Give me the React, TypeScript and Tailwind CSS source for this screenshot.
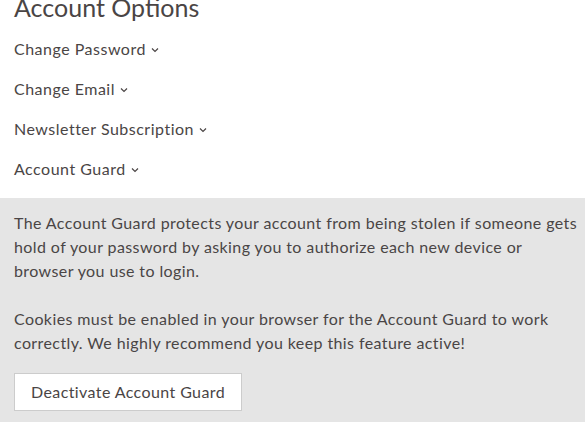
export default function App() {
  const options = ["Change Password", "Change Email", "Newsletter Subscription", "Account Guard"];

  return (
    <div className="w-[585px] h-[422px] overflow-hidden bg-white text-[#4a4545] font-['Lato','Open_Sans',sans-serif]">
      <div className="px-[14px]">
        <h2 className="text-[25px] leading-[30px] -mt-[8px] mb-[7px]">Account Options</h2>
        <ul className="tracking-[0.5px]">
          {options.map((label) => (
            <li key={label} className="h-[40px] flex items-center text-[16px]">
              <span>{label}</span>
              <svg className="ml-[5px] mt-[2px]" width="8" height="6" viewBox="0 0 8 6" fill="none">
                <path d="M1 1.5l3 3 3-3" stroke="currentColor" strokeWidth="1.2" />
              </svg>
            </li>
          ))}
        </ul>
      </div>

      {/* Account Guard panel */}
      <div className="bg-[#e5e5e5] mt-[9px] pl-[14px] pr-[2px] pt-[13px] pb-6 text-[16px] leading-[24px] tracking-[0.4px]">
        <p>
          The Account Guard protects your account from being stolen if someone gets hold of your password by asking
          you to authorize each new device or
          <br />
          browser you use to login.
        </p>
        <p className="mt-[24px] pr-[12px]">
          Cookies must be enabled in your browser for the Account Guard to work correctly. We highly recommend you
          keep this feature active!
        </p>
        <button className="mt-[18px] h-[38px] px-[16px] bg-white border border-[#cccccc] text-[16px] tracking-[0.4px]">
          Deactivate Account Guard
        </button>
      </div>
    </div>
  );
}
